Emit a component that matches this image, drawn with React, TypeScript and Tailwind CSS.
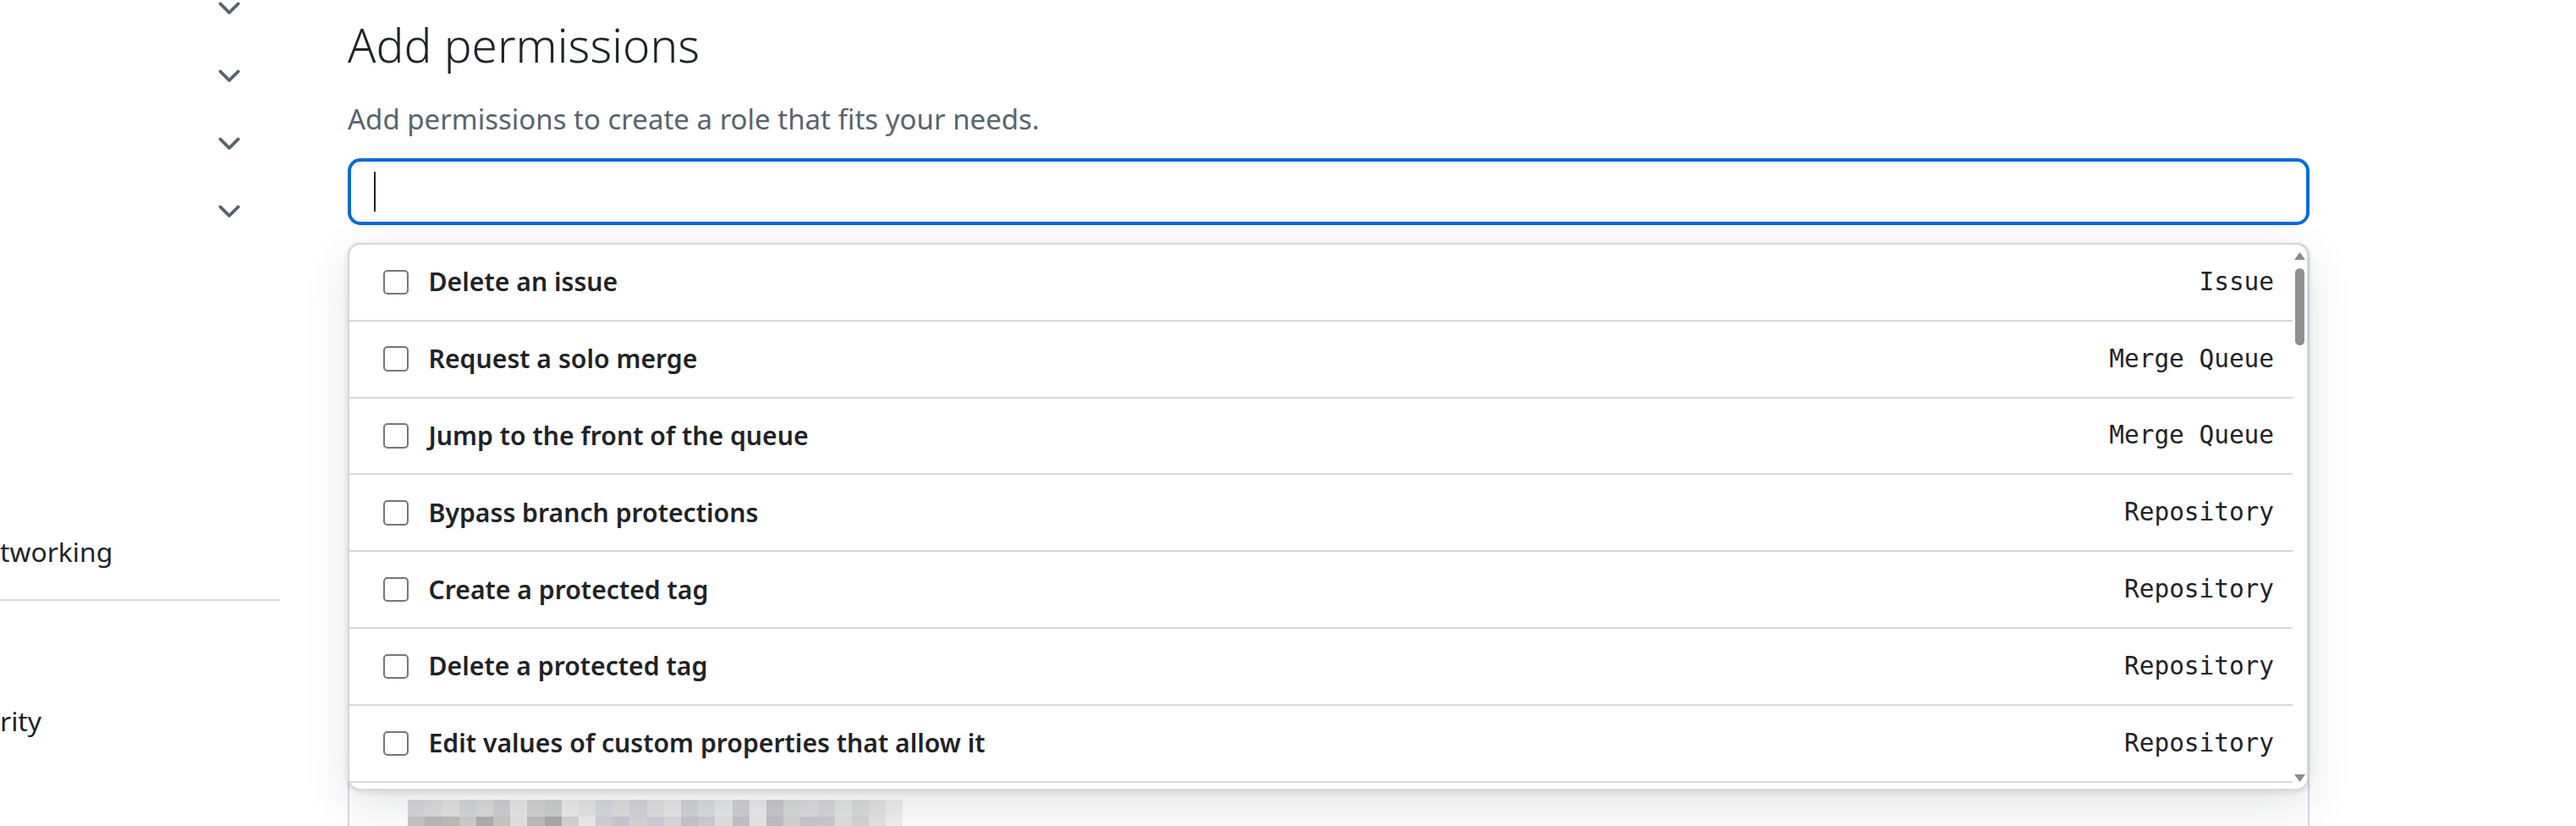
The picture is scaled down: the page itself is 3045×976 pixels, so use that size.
import React from 'react'

const permissions = [
    { label: 'Delete an issue', scope: 'Issue' },
    { label: 'Request a solo merge', scope: 'Merge Queue' },
    { label: 'Jump to the front of the queue', scope: 'Merge Queue' },
    { label: 'Bypass branch protections', scope: 'Repository' },
    { label: 'Create a protected tag', scope: 'Repository' },
    { label: 'Delete a protected tag', scope: 'Repository' },
    { label: 'Edit values of custom properties that allow it', scope: 'Repository' },
]

// redacted strip under the popup
const mosaicTop = ['#d6d6d8', '#dcdcdc', '#e2e2e0', '#d4d4d6', '#dadada', '#cfcfd1', '#e6e6e6', '#d2d2d2', '#cdcdcd', '#ebebeb', '#e4e4e4', '#d8d8dc', '#dedede', '#d4d4d6', '#e0e0e0', '#e8e8e8', '#d2d2d4', '#dadcdc', '#e6e6e6', '#d0d0d2', '#eaeaea', '#c8c8ca', '#d8d8d8', '#dcdcde', '#d6d6d6', '#e4e4e4', '#dadada', '#e2e2e2', '#eeeeee']
const mosaicBottom = ['#c4c4c4', '#b8b8b8', '#bcbcb8', '#cccccc', '#aeaeae', '#c6c6c2', '#e2e2e2', '#bcbcbc', '#a9a9a9', '#d4d4d4', '#ececec', '#d0d0d4', '#c8c8cc', '#d6d6d6', '#cfcfd2', '#dadada', '#c4c4c8', '#cdcdd0', '#e0e0e0', '#c2c2c6', '#e6e6e6', '#bebec2', '#d2d2d2', '#c6c6ca', '#cacacc', '#dedede', '#d4d4d4', '#e4e4e4', '#f0f0f0']

function ChevronDown() {
    return (
        <svg viewBox="0 0 16 16" className="w-[40px] h-[40px]" fill="#59636e">
            <path d="M12.78 5.22a.749.749 0 0 1 0 1.06l-4.25 4.25a.749.749 0 0 1-1.06 0L3.22 6.28a.749.749 0 0 1 .326-1.275.749.749 0 0 1 .734.215L8 8.94l3.72-3.72a.749.749 0 0 1 1.06 0Z" />
        </svg>
    )
}

function Sidebar() {
    return (
        <div className="w-[331px] shrink-0">
            {/* collapsed groups, scrolled partly out of view */}
            <div className="-mt-[30px]">
                {[0, 1, 2, 3].map((i) => (
                    <div key={i} className="h-[80px] flex items-center justify-end pr-[40px]">
                        <ChevronDown />
                    </div>
                ))}
            </div>
            <div className="mt-[340px] text-[31.8px] leading-[44px]">tworking</div>
            <div className="mt-[34px] h-[2.27px] bg-[#d1d9e0]" />
            <div className="mt-[120px] text-[31.8px] leading-[44px]">rity</div>
        </div>
    )
}

function Checkbox() {
    return <div className="w-[29.5px] h-[29.5px] shrink-0 rounded-[5px] border-[2.27px] border-[#767676] bg-white" />
}

function PermissionRow({ label, scope }: { label: string; scope: string }) {
    return (
        <div className="h-[90.83px] shrink-0 flex items-center gap-[24px] pl-[40px] pr-[22px] border-b-[2.27px] border-[#d1d9e0]">
            <Checkbox />
            <span className="flex-1 text-[30.2px] font-semibold leading-none">{label}</span>
            <span className="font-['DejaVu_Sans_Mono',monospace] text-[29.4px] leading-none">{scope}</span>
        </div>
    )
}

function Scrollbar() {
    return (
        <div className="w-[17px] shrink-0 flex flex-col items-center pt-[9px] pb-[8px]">
            <svg viewBox="0 0 13 9" className="w-[13px] h-[9px]" fill="#8c8c8c">
                <path d="M6.5 0 13 9H0Z" />
            </svg>
            <div className="mt-[10px] w-[11px] h-[91px] rounded-full bg-[#8f8f8f]" />
            <div className="flex-1" />
            <svg viewBox="0 0 13 9" className="w-[13px] h-[9px]" fill="#8c8c8c">
                <path d="M0 0H13L6.5 9Z" />
            </svg>
        </div>
    )
}

export default function App() {
    return (
        <div className="w-[3045px] h-[976px] overflow-hidden bg-white flex items-start text-[#1f2328] font-['Noto_Sans',sans-serif]">
            <Sidebar />

            <main className="ml-[80px] w-[2319px] shrink-0">
                <h2 className="mt-[17px] text-[55px] font-light leading-[72px]">Add permissions</h2>
                <p className="mt-[28px] text-[33px] leading-[48px] text-[#59636e]">
                    Add permissions to create a role that fits your needs.
                </p>

                {/* focused search field */}
                <div className="mt-[22px] h-[79px] rounded-[15px] border-[4.5px] border-[#0969da] flex items-center pl-[27px]">
                    <div className="w-[2px] h-[47px] bg-[#1f2328]" />
                </div>

                <div className="relative mt-[21px]">
                    {/* panel underneath the overlay */}
                    <div className="h-[760px] rounded-t-[15px] border-x-[2.27px] border-t-[2.27px] border-[#d1d9e0] pt-[656px] pl-[69px]">
                        <div className="flex">
                            {mosaicTop.map((c, i) => (
                                <div key={i} className="w-[20.2px] h-[20px]" style={{ backgroundColor: c }} />
                            ))}
                        </div>
                        <div className="flex">
                            {mosaicBottom.map((c, i) => (
                                <div key={i} className="w-[20.2px] h-[20px]" style={{ backgroundColor: c }} />
                            ))}
                        </div>
                    </div>

                    {/* permission picker overlay */}
                    <div className="absolute top-0 left-0 right-[1px] h-[647px] rounded-[15px] border-[2.27px] border-[#d1d9e0] bg-white overflow-hidden flex shadow-[0_2px_7px_rgba(31,35,40,0.12),0_18px_54px_rgba(66,74,83,0.14)]">
                        <div className="flex-1 flex flex-col overflow-hidden">
                            {permissions.map((p) => (
                                <PermissionRow key={p.label} label={p.label} scope={p.scope} />
                            ))}
                            {/* next row, scrolled just into view */}
                            <div className="h-[90.83px] shrink-0" />
                        </div>
                        <Scrollbar />
                    </div>
                </div>
            </main>
        </div>
    )
}
